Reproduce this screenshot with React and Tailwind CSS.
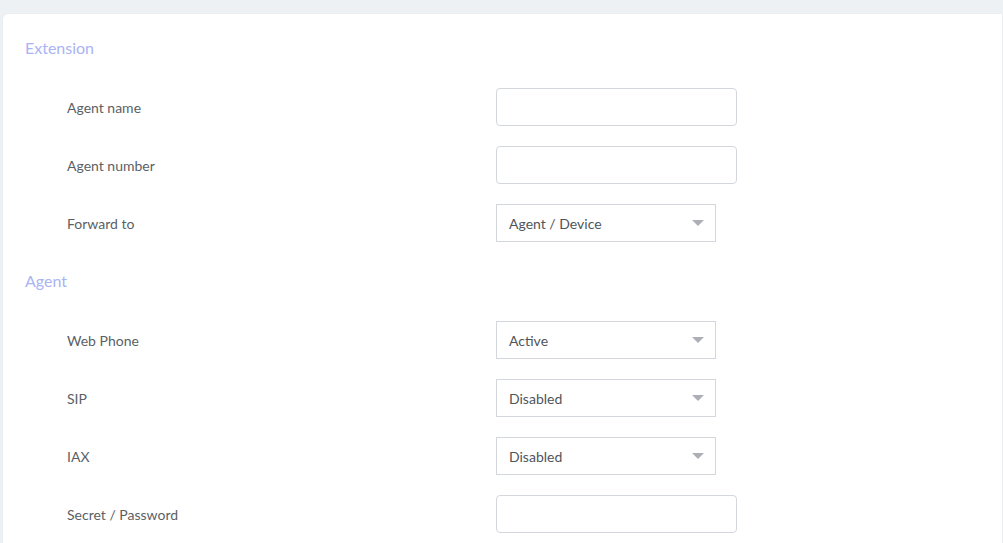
const FONT = { fontFamily: "Lato, 'Open Sans', sans-serif" };

function Caret() {
  return (
    <svg width="12" height="6" viewBox="0 0 12 6" className="shrink-0">
      <path d="M0 0 L12 0 L6 6 Z" fill="#acb0b6" />
    </svg>
  );
}

function TextInput() {
  return (
    <input
      type="text"
      className="h-[38px] w-[241px] rounded-[4px] border border-[#d3d7dc] bg-white px-3 text-[14px] text-[#4a4a4a] outline-none"
    />
  );
}

function Select({ value }) {
  return (
    <div className="flex h-[38px] w-[220px] items-center justify-between border border-[#d3d7dc] bg-white pl-[12px] pr-[11px] text-[14px] text-[#50545a]">
      <span>{value}</span>
      <Caret />
    </div>
  );
}

function Row({ label, children }) {
  return (
    <div className="flex h-[38px] items-center">
      <div className="w-[493px] shrink-0 pl-[64px] text-[14px] text-[#5b5f65]">{label}</div>
      {children}
    </div>
  );
}

function Section({ title, children }) {
  return (
    <div className="flex flex-col">
      <div className="ml-[22px] h-[20px] text-[16px] leading-[20px] text-[#a9b3f5]">{title}</div>
      <div className="mt-[30px] flex flex-col gap-[20px]">{children}</div>
    </div>
  );
}

export default function App() {
  return (
    <div className="h-[543px] w-[1003px] overflow-hidden bg-[#edf1f4] pl-[3px] pt-[14px]" style={FONT}>
      <div className="flex h-[600px] w-[999px] flex-col gap-[29px] rounded-tl-[5px] bg-white pt-[24px] shadow-[0_0_2px_rgba(0,0,0,0.06)]">
        <Section title="Extension">
          <Row label="Agent name">
            <TextInput />
          </Row>
          <Row label="Agent number">
            <TextInput />
          </Row>
          <Row label="Forward to">
            <Select value="Agent / Device" />
          </Row>
        </Section>
        <Section title="Agent">
          <Row label="Web Phone">
            <Select value="Active" />
          </Row>
          <Row label="SIP">
            <Select value="Disabled" />
          </Row>
          <Row label="IAX">
            <Select value="Disabled" />
          </Row>
          <Row label="Secret / Password">
            <TextInput />
          </Row>
        </Section>
      </div>
    </div>
  );
}
